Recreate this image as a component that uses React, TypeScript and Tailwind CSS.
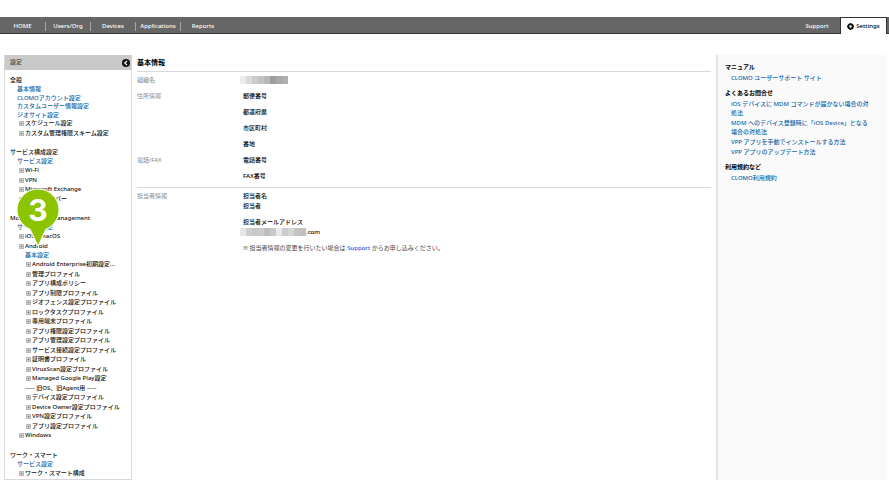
import type { ReactNode } from 'react';
import clsx from 'clsx';

const NAV = ['HOME', 'Users/Org', 'Devices', 'Applications', 'Reports'];

const ANDROID_PROFILES = [
  'Android Enterprise初期設定...',
  '管理プロファイル',
  'アプリ構成ポリシー',
  'アプリ制限プロファイル',
  'ジオフェンス設定プロファイル',
  'ロックタスクプロファイル',
  '専用端末プロファイル',
  'アプリ権限設定プロファイル',
  'アプリ管理設定プロファイル',
  'サービス接続設定プロファイル',
  '証明書プロファイル',
  'VirusScan設定プロファイル',
  'Managed Google Play設定',
];

const LEGACY_PROFILES = [
  'デバイス設定プロファイル',
  'Device Owner設定プロファイル',
  'VPN設定プロファイル',
  'アプリ設定プロファイル',
];

const ADDRESS = ['郵便番号', '都道府県', '市区町村', '番地'];

// Shades of the masked values, left to right
const ORG_MASK = ['#ececec', '#dadada', '#cccccc', '#c2c2c2', '#b8b8b8', '#9f9f9f', '#aaaaaa', '#b0b0b0'];
const MAIL_MASK = [
  '#e6e6e6', '#cfcfcf', '#c8c8c8', '#cccccc', '#bdbdbd', '#c9c9c9',
  '#e9e9e9', '#cdcdcd', '#d6d6d6', '#c4c4c4', '#c0c0c0',
];

const Mask = ({ shades }: { shades: string[] }) => (
  <span className="-ml-[3px] flex" aria-hidden="true">
    {shades.map((shade, i) => (
      <span key={i} className="h-2 w-[6px]" style={{ backgroundColor: shade }} />
    ))}
  </span>
);

const ExpandIcon = () => (
  <svg viewBox="0 0 5 5" className="size-[5px] shrink-0" aria-hidden="true">
    <rect x="0.5" y="0.5" width="4" height="4" fill="#dcdcdc" stroke="#b8b8b8" />
    <path d="M1.5 2.5h2M2.5 1.500v2" stroke="#777" strokeWidth="0.8" />
  </svg>
);

const Group = ({ title, children }: { title: string; children: ReactNode }) => (
  <section className="mb-[10px] last:mb-0">
    <h2 className="h-[9px] pl-[5px]">{title}</h2>
    {children}
  </section>
);

const Links = ({ items, nested }: { items: string[]; nested?: boolean }) => (
  <ul className={nested ? 'pl-5' : 'pl-3'}>
    {items.map((item) => (
      <li key={item} className="odd:h-[9px] even:h-2">
        <a href="#" className="block text-[#1565a5]">{item}</a>
      </li>
    ))}
  </ul>
);

const Nodes = ({ items, nested }: { items: string[]; nested?: boolean }) => (
  <ul className={nested ? 'pl-[21px]' : 'pl-[14px]'}>
    {items.map((item) => (
      <li key={item} className="odd:h-[10px] even:h-[9px]">
        <button type="button" className="flex items-center gap-px whitespace-nowrap">
          <ExpandIcon />
          {item}
        </button>
      </li>
    ))}
  </ul>
);

const Pin = () => (
  <div className="absolute top-[133px] left-[11px] h-[58px] w-11">
    <svg viewBox="0 0 44 58" className="h-full w-full" aria-hidden="true">
      <path
        d="M22 57 L14.5 41 A20.5 20.5 0 1 1 29.5 41 Z"
        fill="#8cc400"
        stroke="#fff"
        strokeWidth="2"
        paintOrder="stroke"
      />
    </svg>
    <span className="absolute inset-x-0 top-0 text-center font-[Inter,sans-serif] text-[30px] leading-[44px] font-bold text-white">
      3
    </span>
  </div>
);

const TopBar = () => (
  <header className="flex h-[17px] border-b border-[#333] bg-[#666] text-white">
    <nav className="flex items-center pt-[2px]">
      {NAV.map((item, i) => (
        <a
          key={item}
          href="#"
          className={clsx('w-[45px] text-center', i > 0 && 'border-l border-[#a5a5a5]')}
        >
          {item}
        </a>
      ))}
    </nav>
    <a href="#" className="ml-auto flex w-[46px] items-center justify-center pt-[2px]">Support</a>
    <a
      href="#"
      className="mr-[2px] -mb-px flex w-[47px] items-center justify-center gap-[2px] border-x border-t border-[#333] bg-white pt-px text-black"
    >
      <svg viewBox="0 0 12 12" className="size-[7px]" aria-hidden="true">
        <circle cx="6" cy="6" r="3.8" fill="none" stroke="#111" strokeWidth="3.6" />
        <path d="M5 4 8 6 5 8Z" fill="#fff" />
        <path d="M6 0v2M6 10v2M0 6h2M10 6h2" stroke="#111" strokeWidth="1.5" />
      </svg>
      Settings
    </a>
  </header>
);

const Sidebar = () => (
  <aside className="relative w-32 shrink-0 border border-t-0 border-[#d9d9d9]">
    <div className="flex h-[15px] items-center justify-between bg-[#c9c9c9] pr-px pl-[5px] text-[#444]">
      設定
      <button type="button" aria-label="閉じる">
        <svg viewBox="0 0 16 16" className="size-2">
          <circle cx="8" cy="8" r="8" fill="#111" />
          <path d="M10 4 5.5 8l4.5 4" fill="none" stroke="#fff" strokeWidth="2.4" />
        </svg>
      </button>
    </div>
    <nav className="pt-[6px]">
      <Group title="全般">
        <Links items={['基本情報', 'CLOMOアカウント設定', 'カスタムユーザー情報設定', 'ジオサイト設定']} />
        <Nodes items={['スケジュール設定', 'カスタム管理権限スキーム設定']} />
      </Group>
      <Group title="サービス構成設定">
        <Links items={['サービス設定']} />
        <Nodes items={['Wi-Fi', 'VPN', 'Microsoft Exchange', 'メールサーバー']} />
      </Group>
      <Group title="Mobile Device Management">
        <Links items={['サービス設定']} />
        <Nodes items={['iOS / macOS', 'Android']} />
        <Links nested items={['基本設定']} />
        <Nodes nested items={ANDROID_PROFILES} />
        <p className="h-[9px] pl-5">----- 旧OS、旧Agent用 -----</p>
        <Nodes nested items={LEGACY_PROFILES} />
        <Nodes items={['Windows']} />
      </Group>
      <Group title="ワーク・スマート">
        <Links items={['サービス設定']} />
        <Nodes items={['ワーク・スマート構成']} />
      </Group>
    </nav>
    <Pin />
  </aside>
);

const Row = ({ label, children }: { label: string; children: ReactNode }) => (
  <div className="flex">
    <dt className="w-[106px] shrink-0 font-normal text-[#888]">{label}</dt>
    <dd className="text-black">{children}</dd>
  </div>
);

const Details = () => (
  <main className="ml-[5px] min-w-0 flex-1">
    <h1 className="h-4 text-[7px] leading-4 font-bold text-black">基本情報</h1>
    <dl className="border-t border-[#d9d9d9] pb-[3px] leading-4">
      <Row label="組織名">
        <div className="flex h-4 items-center">
          <Mask shades={ORG_MASK} />
        </div>
      </Row>
      <Row label="住所情報">
        {ADDRESS.map((line) => (
          <p key={line}>{line}</p>
        ))}
      </Row>
      <Row label="電話/FAX">
        <p>電話番号</p>
        <p>FAX番号</p>
      </Row>
    </dl>
    <dl className="border-t border-[#d9d9d9] pt-[3px] leading-[10px]">
      <Row label="担当者情報">
        <p>担当者名</p>
        <p>担当者</p>
        <p className="mt-[6px]">担当者メールアドレス</p>
        <p className="flex items-center"><Mask shades={MAIL_MASK} />.com</p>
        <p className="mt-[6px] font-normal text-[#444]">
          ※ 担当者情報の変更を行いたい場合は <a href="#" className="font-medium text-[#1a56f0]">Support</a> からお申し込みください。
        </p>
      </Row>
    </dl>
  </main>
);

const HelpBlock = ({ title, children }: { title: string; children: ReactNode }) => (
  <section className="mb-[5px]">
    <h2 className="leading-[10px] font-bold text-black">{title}</h2>
    <ul className="flex flex-col gap-px pt-[2px] pl-[6px] text-[#1565a5]">{children}</ul>
  </section>
);

const Help = () => (
  <aside className="mr-[2px] ml-[5px] w-[171px] shrink-0 border-l-2 border-[#e4e4e4] bg-[#fafafa] pt-[7px] pl-[7px]">
    <HelpBlock title="マニュアル">
      <li><a href="#">CLOMO ユーザーサポート サイト</a></li>
    </HelpBlock>
    <HelpBlock title="よくあるお問合せ">
      <li><a href="#">iOS デバイスに MDM コマンドが届かない場合の対<br />処法</a></li>
      <li><a href="#">MDM へのデバイス登録時に「iOS Device」となる<br />場合の対処法</a></li>
      <li><a href="#">VPP アプリを手動でインストールする方法</a></li>
      <li><a href="#">VPP アプリのアップデート方法</a></li>
    </HelpBlock>
    <HelpBlock title="利用規約など">
      <li><a href="#">CLOMO利用規約</a></li>
    </HelpBlock>
  </aside>
);

export default function App() {
  return (
    <div
      lang="ja"
      className="min-h-screen bg-white pt-[17px] font-['Noto_Sans','Noto_Sans_CJK_JP',sans-serif] text-[6px] leading-[9px] font-medium text-[#111]"
    >
      <TopBar />
      <div className="mt-[21px] flex pl-1">
        <Sidebar />
        <Details />
        <Help />
      </div>
    </div>
  );
}
